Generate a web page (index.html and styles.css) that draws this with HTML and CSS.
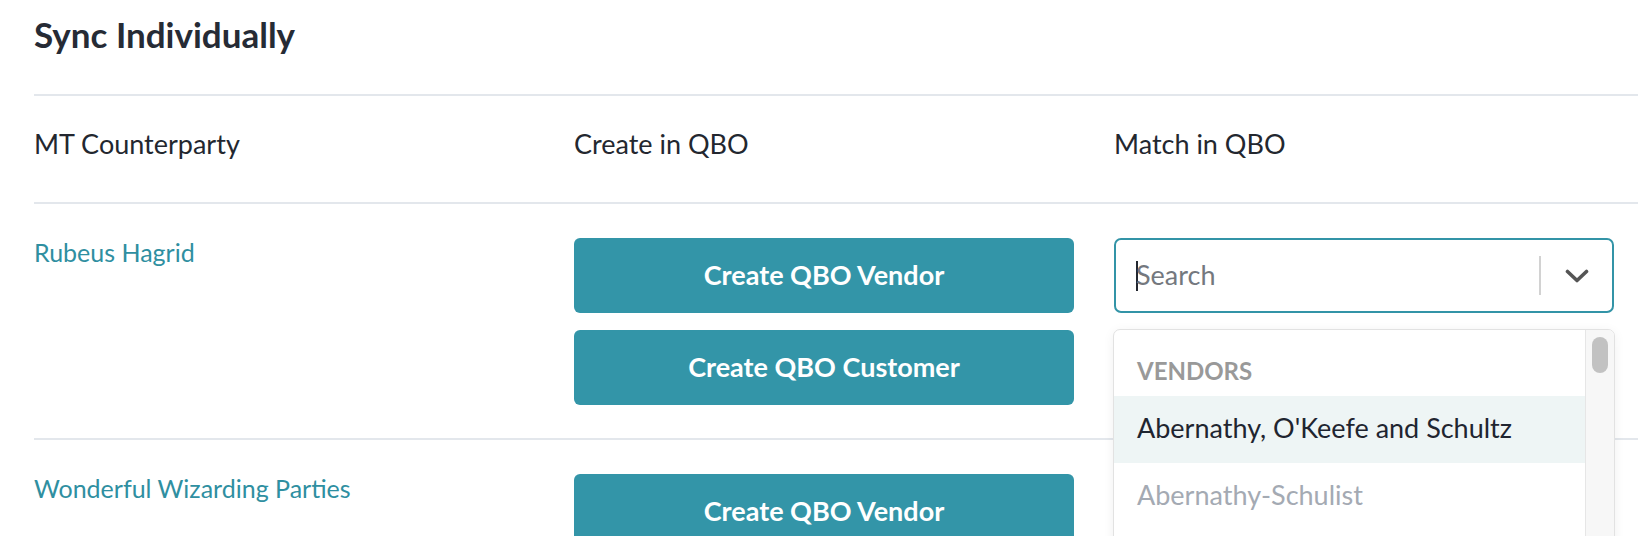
FILE: index.html
```html
<!DOCTYPE html>
<html lang="en">
<head>
<meta charset="utf-8">
<title>Sync Individually</title>
<link rel="stylesheet" href="styles.css">
</head>
<body>
<main class="page">
  <h2 class="title">Sync Individually</h2>
  <div class="table">
    <div class="row head">
      <div class="cell">MT Counterparty</div>
      <div class="cell">Create in QBO</div>
      <div class="cell">Match in QBO</div>
    </div>
    <div class="row">
      <div class="cell"><a class="name" href="#">Rubeus Hagrid</a></div>
      <div class="cell actions">
        <button class="btn">Create QBO Vendor</button>
        <button class="btn">Create QBO Customer</button>
      </div>
      <div class="cell match">
        <div class="select">
          <div class="select-input"><span class="caret"></span><span class="placeholder">Search</span></div>
          <span class="select-sep"></span>
          <span class="select-arrow">
            <svg width="24" height="15" viewBox="0 0 24 15"><path d="M2.5 2.5 L12 11.5 L21.5 2.5" fill="none" stroke="#555" stroke-width="3.6" stroke-linecap="round" stroke-linejoin="round"/></svg>
          </span>
        </div>
        <div class="menu">
          <div class="menu-list">
            <div class="group">VENDORS</div>
            <div class="option active">Abernathy, O'Keefe and Schultz</div>
            <div class="option muted">Abernathy-Schulist</div>
            <div class="option muted">Adams Group</div>
          </div>
          <div class="menu-track"><span class="menu-thumb"></span></div>
        </div>
      </div>
    </div>
    <div class="row">
      <div class="cell"><a class="name" href="#">Wonderful Wizarding Parties</a></div>
      <div class="cell actions">
        <button class="btn">Create QBO Vendor</button>
        <button class="btn">Create QBO Customer</button>
      </div>
      <div class="cell match"></div>
    </div>
  </div>
</main>
</body>
</html>
```

FILE: styles.css
```css
html, body {
  margin: 0;
  padding: 0;
  overflow: hidden;
  background: #ffffff;
}

body {
  font-family: "Lato", "Noto Sans", sans-serif;
  color: #23272f;
}

.page {
  padding-left: 34px;
}

.title {
  margin: 0;
  padding: 14px 0 40px;
  font-size: 35px;
  line-height: 40px;
  font-weight: 700;
  color: #262b35;
}

.row {
  display: grid;
  grid-template-columns: 540px 540px 1fr;
  border-top: 2px solid #e3e7ec;
  padding: 34px 0 33px;
}

.row.head {
  padding: 32px 0 42px;
  font-size: 27px;
  line-height: 32px;
  color: #23272f;
}

.name {
  display: block;
  font-size: 25px;
  line-height: 28px;
  color: #2f8fa1;
  text-decoration: none;
}

.actions {
  display: flex;
  flex-direction: column;
  gap: 17px;
}

.btn {
  width: 500px;
  height: 75px;
  border: none;
  border-radius: 6px;
  background: #3395a8;
  color: #ffffff;
  font-family: "Lato", "Noto Sans", sans-serif;
  font-size: 27px;
  font-weight: 700;
  padding: 0 0 3px;
}

.match {
  position: relative;
}

.select {
  width: 500px;
  height: 75px;
  box-sizing: border-box;
  border: 2px solid #3394a7;
  border-radius: 7px;
  display: flex;
  align-items: center;
}

.select-input {
  flex: 1;
  display: flex;
  align-items: center;
  padding-left: 20px;
}

.caret {
  width: 2px;
  height: 30px;
  background: #23272f;
}

.placeholder {
  font-size: 27px;
  color: #74787e;
  margin-left: -2px;
  margin-bottom: 3px;
}

.select-sep {
  width: 2px;
  height: 39px;
  background: #d2d2d2;
}

.select-arrow {
  width: 71px;
  display: flex;
  justify-content: center;
  align-items: center;
  padding-top: 2px;
}

.menu {
  position: absolute;
  top: 91px;
  left: -1px;
  width: 502px;
  height: 420px;
  box-sizing: border-box;
  border: 1px solid #e2e2e2;
  border-radius: 7px;
  background: #ffffff;
  box-shadow: 0 2px 12px rgba(0, 0, 0, 0.06);
  display: flex;
  overflow: hidden;
  z-index: 2;
}

.menu-list {
  flex: 1;
}

.group {
  padding: 27px 0 11px 23px;
  font-size: 24px;
  line-height: 28px;
  font-weight: 700;
  color: #999999;
}

.option {
  padding: 16px 0 19px 23px;
  font-size: 27px;
  line-height: 32px;
}

.option.active {
  background: #eef5f5;
  color: #1f2530;
}

.option.muted {
  color: #a4aab3;
}

.menu-track {
  width: 29px;
  border-left: 1px solid #e6e6e6;
  background: #f7f7f7;
  display: flex;
  justify-content: center;
  padding-top: 7px;
  box-sizing: border-box;
}

.menu-thumb {
  width: 16px;
  height: 36px;
  border-radius: 8px;
  background: #c2c2c2;
}
```
